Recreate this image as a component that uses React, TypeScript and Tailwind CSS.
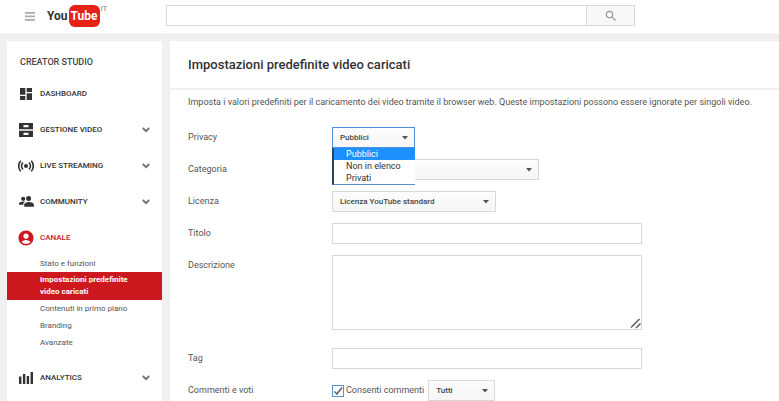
import type { ReactNode } from "react";
import { MdAccountCircle, MdDashboard, MdSearch } from "react-icons/md";

const fieldBorder = "border border-[#d9d9d9]";

function MenuIcon() {
  return (
    <svg viewBox="0 0 10 9" className="h-[9px] w-[10px]" fill="#aaa" aria-hidden="true">
      <path d="M0 0h10v1.800H0zM0 3.500h10v1.800H0zM0 7h10v1.800H0z" />
    </svg>
  );
}

function PeopleIcon() {
  return (
    <svg viewBox="0 0 15 11" className="h-[11px] w-[15px]" fill="currentColor" aria-hidden="true">
      <circle cx="4.200" cy="2.800" r="2.100" />
      <circle cx="9.600" cy="2.500" r="2.500" />
      <path d="M0 8.800V7.600C0 6.300 2.400 5.500 4.400 5.500c.6 0 1.200.1 1.700.2C4.700 6.500 4.300 7.300 4.200 8.800zM5.200 10.700V8.800C5.200 7 7.800 6 10 6s4.900 1 4.900 2.800v1.900z" />
    </svg>
  );
}

function DrawersIcon() {
  return (
    <svg viewBox="0 0 14 14" className="h-[14px] w-[14px]" fill="currentColor" aria-hidden="true">
      <path fillRule="evenodd" d="M0 0h14v6.300H0zM4.500 2v2.200h5V2zM0 7.700h14V14H0zM4.500 9.700v2.200h5V9.700z" />
    </svg>
  );
}

function LiveIcon() {
  return (
    <svg viewBox="0 0 16 12" className="h-3 w-4" fill="none" stroke="currentColor" strokeWidth="1.6" aria-hidden="true">
      <circle cx="8" cy="6" r="2" fill="currentColor" stroke="none" />
      <path d="M5 2.6a4.6 4.6 0 0 0 0 6.8M11 2.6a4.6 4.6 0 0 1 0 6.8M2.8.8a7.4 7.4 0 0 0 0 10.4M13.2.8a7.4 7.4 0 0 1 0 10.4" />
    </svg>
  );
}

function BarsIcon() {
  return (
    <svg viewBox="0 0 14 12" className="h-3 w-[14px]" fill="currentColor" aria-hidden="true">
      <path d="M0 4.500h2.400V12H0zM3.900 2h2.400v10H3.900zM7.700 4h2.400v8H7.700zM11.600 0H14v12h-2.400z" />
    </svg>
  );
}

function Chevron() {
  return (
    <svg viewBox="0 0 8 6" className="h-[6px] w-2" fill="none" stroke="#757575" strokeWidth="2" aria-hidden="true">
      <path d="M.8 1L4 4.200 7.200 1" />
    </svg>
  );
}

function NavItem({ icon, label, open, arrow }: { icon: ReactNode; label: string; open?: boolean; arrow?: boolean }) {
  return (
    <button
      type="button"
      className={`flex h-9 w-full items-center pt-px pr-3 pl-[11px] text-[8px] font-medium ${open ? "text-[#cc181e]" : "text-[#333]"}`}
    >
      <span className="mr-[6px] flex w-4 justify-center">{icon}</span>
      <span className="flex-1 text-left">{label}</span>
      {arrow && <Chevron />}
    </button>
  );
}

function Dropdown({ id, value, width, options, open }: { id: string; value: string; width: string; options?: string[]; open?: boolean }) {
  return (
    <div className={`relative ${width}`}>
      <select
        id={id}
        defaultValue={value}
        className={`block h-[21px] w-full appearance-none bg-linear-to-b from-[#fcfcfc] to-[#f6f6f6] pr-5 pl-[7px] text-[8px] font-medium text-[#444] outline-none ${open ? "border border-[#4a90d9]" : fieldBorder}`}
      >
        {(options ?? [value]).map((o) => (
          <option key={o}>{o}</option>
        ))}
      </select>
      <svg viewBox="0 0 6 4" className="pointer-events-none absolute top-[9px] right-[7px] h-1 w-[6px]" fill="#555" aria-hidden="true">
        <path d="M0 0h6L3 3.4z" />
      </svg>
      {open && (
        <ul role="listbox" aria-label="Privacy" className="absolute top-[21px] left-0 z-10 w-full border-b border-l-2 border-b-[#5b8fd0] border-l-[#2f4260] bg-white text-[9px] leading-3 text-[#333]">
          {options?.map((o) => (
            <li key={o} role="option" aria-selected={o === value} className={`pl-3 ${o === value ? "bg-[#1e90ff] text-white" : ""}`}>
              {o}
            </li>
          ))}
        </ul>
      )}
    </div>
  );
}

function Row({ id, label, children }: { id: string; label: string; children: ReactNode }) {
  return (
    <div className="flex items-start">
      <label htmlFor={id} className="w-36 shrink-0 leading-[21px]">
        {label}
      </label>
      {children}
    </div>
  );
}

export default function App() {
  return (
    <div className="flex min-h-screen flex-col bg-[#f0f0f0] font-['Roboto',sans-serif] text-[9px] text-[#555]">
      <header className="flex h-[33px] items-start bg-white">
        <button type="button" aria-label="Menu" className="mt-3 ml-[25px]">
          <MenuIcon />
        </button>
        <a href="#" aria-label="YouTube IT" className="ml-3 flex w-[119px] items-start pt-[5px] text-[12px] leading-[22px] font-bold text-[#333]">
          <span>You</span>
          <span className="ml-px rounded-[6px] bg-[#e62117] px-[2px] text-white">Tube</span>
          <span className="ml-px text-[8px] leading-2 font-normal text-[#888]">IT</span>
        </a>
        <form className="mt-[5px] flex h-[21px] w-[469px]">
          <input aria-label="Cerca" className={`min-w-0 flex-1 bg-white px-2 outline-none ${fieldBorder}`} />
          <button type="button" aria-label="Cerca" className={`flex w-12 items-center justify-center border-l-0 bg-[#f8f8f8] text-[#999] ${fieldBorder}`}>
            <MdSearch size={14} />
          </button>
        </form>
      </header>

      <div className="flex flex-1 gap-2 pt-2 pl-[7px]">
        <nav className="w-[155px] shrink-0 bg-white">
          <h2 className="pt-3 pb-1 pl-[13px] text-[9px] leading-[18px] font-medium text-[#444]">CREATOR STUDIO</h2>
          <NavItem icon={<MdDashboard size={16} />} label="DASHBOARD" />
          <NavItem icon={<DrawersIcon />} label="GESTIONE VIDEO" arrow />
          <NavItem icon={<LiveIcon />} label="LIVE STREAMING" arrow />
          <NavItem icon={<PeopleIcon />} label="COMMUNITY" arrow />
          <NavItem icon={<MdAccountCircle size={18} className="shrink-0" />} label="CANALE" open />
          <ul className="pb-2 text-[8px] leading-[17px]">
            <li>
              <a href="#" className="block pl-[33px]">Stato e funzioni</a>
            </li>
            <li>
              <a href="#" className="block bg-[#cc181e] py-[2px] pr-8 pl-[33px] leading-3 font-bold text-white">
                Impostazioni predefinite video caricati
              </a>
            </li>
            <li>
              <a href="#" className="block pl-[33px]">Contenuti in primo piano</a>
            </li>
            <li>
              <a href="#" className="block pl-[33px]">Branding</a>
            </li>
            <li>
              <a href="#" className="block pl-[33px]">Avanzate</a>
            </li>
          </ul>
          <NavItem icon={<BarsIcon />} label="ANALYTICS" arrow />
        </nav>

        <main className="min-w-0 flex-1 bg-white">
          <h1 className="border-b-2 border-[#f0f0f0] pl-[18px] text-[13px] leading-[47px] font-medium text-[#333]">
            Impostazioni predefinite video caricati
          </h1>
          <p className="pt-1 pl-[18px] leading-[17px] whitespace-nowrap">
            Imposta i valori predefiniti per il caricamento dei video tramite il browser web. Queste impostazioni possono essere ignorate per singoli video.
          </p>
          <form className="flex flex-col gap-[11px] pt-4 pr-4 pl-[18px]">
            <Row id="privacy" label="Privacy">
              <Dropdown id="privacy" value="Pubblici" width="w-[83px]" options={["Pubblici", "Non in elenco", "Privati"]} open />
            </Row>
            <Row id="categoria" label="Categoria">
              <Dropdown id="categoria" value="" width="w-[207px]" />
            </Row>
            <Row id="licenza" label="Licenza">
              <Dropdown id="licenza" value="Licenza YouTube standard" width="w-[164px]" />
            </Row>
            <Row id="titolo" label="Titolo">
              <input id="titolo" className={`h-[21px] w-[310px] px-2 outline-none ${fieldBorder}`} />
            </Row>
            <Row id="descrizione" label="Descrizione">
              <div className="relative mb-[7px] w-[310px]">
                <textarea id="descrizione" className={`block h-[75px] w-full resize-none p-2 outline-none ${fieldBorder}`} />
                <svg viewBox="0 0 11 11" className="pointer-events-none absolute right-px bottom-px h-[11px] w-[11px]" stroke="#666" strokeWidth="1.6" aria-hidden="true">
                  <path d="M1 9.5L9.5 1M6 10l4.500-4.500" />
                </svg>
              </div>
            </Row>
            <Row id="tag" label="Tag">
              <input id="tag" className={`h-[21px] w-[310px] px-2 outline-none ${fieldBorder}`} />
            </Row>
            <Row id="commenti" label="Commenti e voti">
              <label className="flex h-[21px] items-center gap-[2px]">
                <span className="relative flex">
                  <input type="checkbox" defaultChecked className="h-3 w-3 appearance-none border border-[#5b8fd0] bg-white" />
                  <svg viewBox="0 0 12 12" className="pointer-events-none absolute inset-0" fill="none" stroke="#666" strokeWidth="1.6" aria-hidden="true">
                    <path d="M2.500 6.500L5 9l5-6.500" />
                  </svg>
                </span>
                Consenti commenti
              </label>
              <div className="ml-1">
                <Dropdown id="commenti" value="Tutti" width="w-[67px]" />
              </div>
            </Row>
          </form>
        </main>
      </div>
    </div>
  );
}
